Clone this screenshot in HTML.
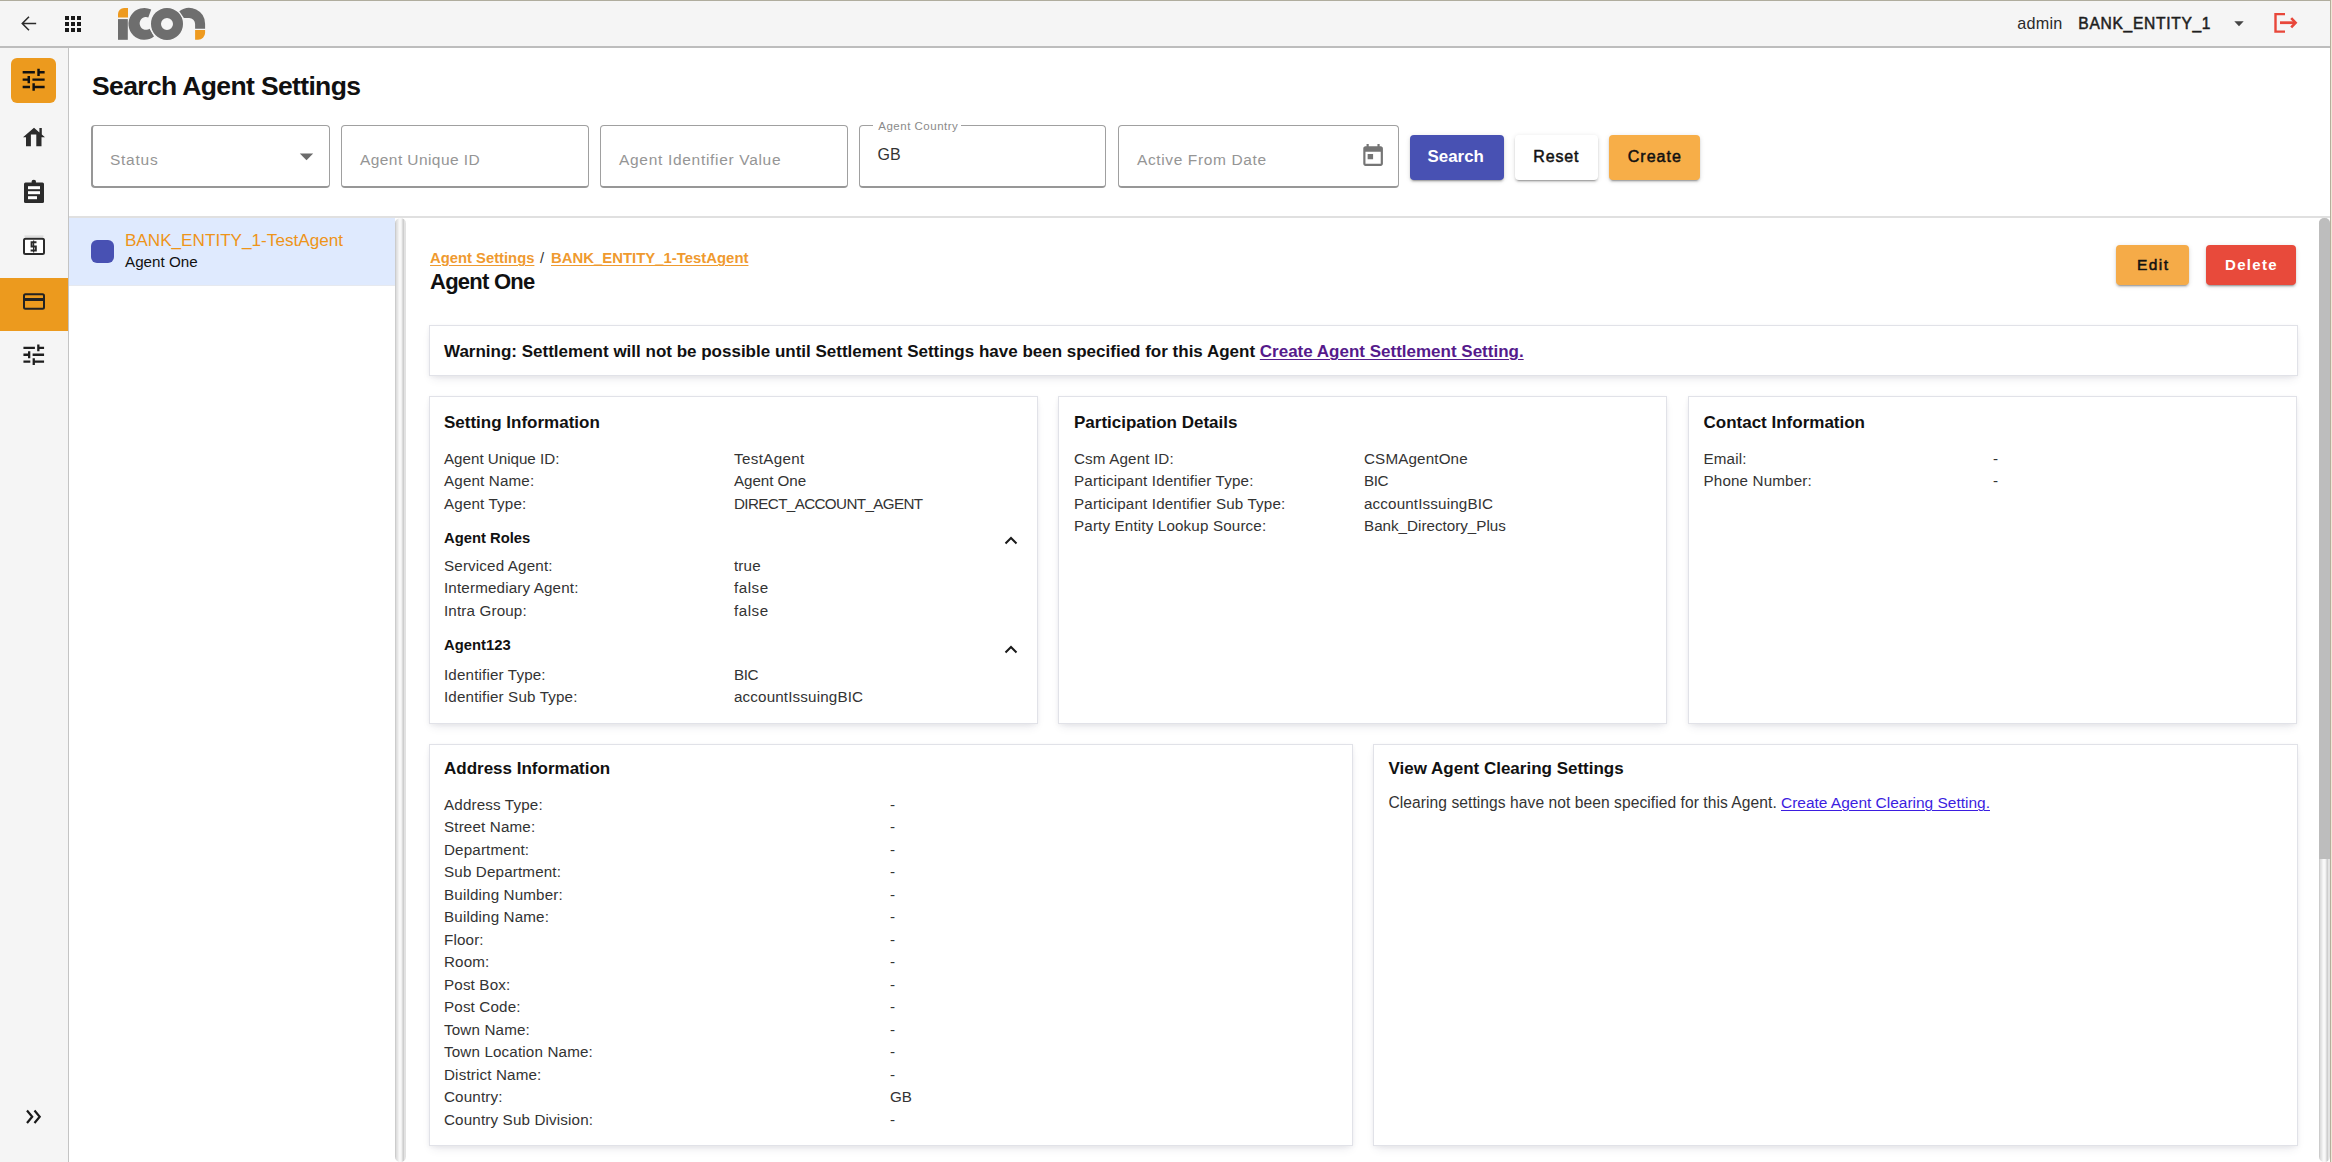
<!DOCTYPE html>
<html><head><meta charset="utf-8"><title>Search Agent Settings</title>
<style>
html,body{margin:0;padding:0;width:2332px;height:1162px;overflow:hidden;background:#fff;}
body{position:relative;font-family:"Liberation Sans",sans-serif;}
.t{position:absolute;white-space:nowrap;}
.r{position:absolute;}
u{text-decoration-thickness:1.3px;}
</style></head><body>
<div class="r" style="left:0px;top:0px;width:2332px;height:48px;background:#f5f5f5;"></div>
<div class="r" style="left:0px;top:0px;width:2332px;height:1px;background:#b0ad9e;"></div>
<div class="r" style="left:0px;top:46px;width:2330px;height:2px;background:#bdbdbd;"></div>
<svg class="r" style="left:17px;top:12px;" width="23" height="23" viewBox="0 0 24 24"><path d="M20 12H5.5M12.5 5L5.5 12L12.5 19" fill="none" stroke="#2b2b2b" stroke-width="1.6"/></svg>
<svg class="r" style="left:61px;top:12px;" width="24" height="24" viewBox="0 0 24 24"><path fill="#1a1a1a" d="M4 8h4V4H4v4zm6 12h4v-4h-4v4zm-6 0h4v-4H4v4zm0-6h4v-4H4v4zm6 0h4v-4h-4v4zm6-10v4h4V4h-4zm-6 4h4V4h-4v4zm6 6h4v-4h-4v4zm0 6h4v-4h-4v4z"/></svg>
<svg class="r" style="left:0px;top:0px;" width="220" height="47" viewBox="0 0 220 47">
<path fill="#ee9a1f" d="M118 17.6V14A6.1 6.1 0 0 1 124.1 7.9H128V17.6Z"/>
<rect x="118" y="19.1" width="9.8" height="20.7" fill="#6e6e6e"/>
<path fill="#6e6e6e" d="M151.2 9.6A15.9 15.9 0 1 0 154 36.6L149.6 28.7A6.4 6.4 0 1 1 148.3 17.4Z"/>
<circle cx="167" cy="23.9" r="11" fill="none" stroke="#f5f5f5" stroke-width="12.6"/>
<circle cx="167" cy="23.9" r="11" fill="none" stroke="#6e6e6e" stroke-width="10"/>
<path fill="#f5f5f5" d="M178.2 10.3A17.2 17.2 0 0 1 206.3 24V29.5H193.8V24A4.7 4.7 0 0 0 189.1 19.3H183.1Z"/>
<path fill="#6e6e6e" d="M179.3 11.3A16 16 0 0 1 205.1 24V28.8H195.1V24A6 6 0 0 0 189.1 18H183.9Z"/>
<path fill="#ee9a1f" d="M195.1 30H205.1V32.8A7 7 0 0 1 198.1 39.8H195.1Z"/>
</svg>
<div class="t" style="left:2017.3px;top:15.49px;font-size:16.2px;line-height:16.2px;color:#2a2a2a;letter-spacing:0.2px;">admin</div>
<div class="t" style="left:2078.3px;top:15.69px;font-size:15.6px;line-height:15.6px;color:#1e1e1e;-webkit-text-stroke:0.5px currentColor;letter-spacing:0.69px;">BANK_ENTITY_1</div>
<svg class="r" style="left:2233px;top:20px;" width="12" height="8" viewBox="0 0 12 8"><path d="M1.3 1.2H10.7L6 6.2Z" fill="#444"/></svg>
<svg class="r" style="left:2272px;top:11px;" width="28" height="24" viewBox="0 0 28 24"><path d="M13 3.1H3.5V20.6H13" fill="none" stroke="#e8473a" stroke-width="2.4"/><path d="M8 11.7H22.5" stroke="#e8473a" stroke-width="2.8"/><path d="M19.2 7.1L23.6 11.7L19.2 16.3" fill="none" stroke="#e8473a" stroke-width="2.6"/></svg>
<div class="r" style="left:0px;top:48px;width:68px;height:1114px;background:#f5f5f5;"></div>
<div class="r" style="left:68px;top:48px;width:1px;height:1114px;background:#c4c4c4;"></div>
<div class="r" style="left:11px;top:58px;width:45px;height:45px;background:#ec9a1e;border-radius:6px;"></div>
<svg class="r" style="left:19.2px;top:65.3px;" width="29.3" height="29.3" viewBox="0 0 24 24"><path fill="#111" d="M3 17v2h6v-2H3zM3 5v2h10V5H3zm10 16v-2h8v-2h-8v-2h-2v6h2zM7 9v2H3v2h4v2h2V9H7zm14 4v-2H11v2h10zm-6-4h2V7h4V5h-4V3h-2v6z"/></svg>
<svg class="r" style="left:0px;top:0px;" width="68" height="220" viewBox="0 0 68 220"><path fill="#2b2b2b" d="M23 137.3L34 127.8L39.4 132.4V128H41.8V134.4L45 137.3H41.5V146.2H36.3V134.6H30.9V146.2H26V137.3Z"/><path fill="#2b2b2b" d="M0 0"/><rect x="24" y="182.5" width="20" height="20.5" rx="1.5" fill="#2b2b2b"/><circle cx="33.8" cy="182" r="2.3" fill="#2b2b2b"/><rect x="28" y="186.2" width="12" height="3" fill="#fff"/><rect x="28" y="191.2" width="12" height="3" fill="#fff"/><rect x="28" y="196.2" width="9" height="3" fill="#fff"/></svg>
<svg class="r" style="left:0px;top:230px;" width="68" height="40" viewBox="0 230 68 40"><rect x="24.5" y="235.6" width="19" height="1" fill="#cfcfcf"/><rect x="24" y="238.8" width="20" height="15.2" rx="1.5" fill="#fff" stroke="#2b2b2b" stroke-width="2"/><path d="M36.5 242.2H31.6V246.4H35.8V250.6H30.6" fill="none" stroke="#2b2b2b" stroke-width="2"/><path d="M33.6 240.5V252.5" stroke="#2b2b2b" stroke-width="1.2"/></svg>
<div class="r" style="left:0px;top:278px;width:68px;height:53px;background:#ec9a1e;"></div>
<svg class="r" style="left:0px;top:285px;" width="68" height="30" viewBox="0 285 68 30"><rect x="24" y="294.2" width="20" height="14.6" rx="1.5" fill="none" stroke="#222" stroke-width="2"/><rect x="24" y="298" width="20" height="3" fill="#222"/></svg>
<svg class="r" style="left:19.5px;top:340.8px;" width="27.5" height="27.5" viewBox="0 0 24 24"><path fill="#1e1e1e" d="M3 17v2h6v-2H3zM3 5v2h10V5H3zm10 16v-2h8v-2h-8v-2h-2v6h2zM7 9v2H3v2h4v2h2V9H7zm14 4v-2H11v2h10zm-6-4h2V7h4V5h-4V3h-2v6z"/></svg>
<svg class="r" style="left:0px;top:1100px;" width="68" height="30" viewBox="0 1100 68 30"><path d="M27 1110.5L32.2 1116.7L27 1123M34.5 1110.5L39.7 1116.7L34.5 1123" fill="none" stroke="#1a1a1a" stroke-width="2.2"/></svg>
<div class="r" style="left:69px;top:48px;width:2261px;height:1114px;background:#fff;"></div>
<div class="r" style="left:2330px;top:0px;width:1px;height:1162px;background:#b4ae9c;"></div>
<div class="r" style="left:2331px;top:0px;width:1px;height:1162px;background:#efe6d6;"></div>
<div class="t" style="left:92px;top:73.27px;font-size:26.5px;line-height:26.5px;color:#111;font-weight:700;letter-spacing:-0.64px;">Search Agent Settings</div>
<div class="r" style="left:91px;top:125px;width:239px;height:63px;border:1px solid #a0a0a0;border-bottom:2px solid #979797;border-left:2px solid #979797;border-radius:4px;box-sizing:border-box;"></div>
<div class="t" style="left:110px;top:151.58px;font-size:15.5px;line-height:15.5px;color:#959595;letter-spacing:0.74px;">Status</div>
<svg class="r" style="left:298px;top:151px;" width="16" height="12" viewBox="0 0 16 12"><path d="M1.8 2.6H15.2L8.5 9.2Z" fill="#6b6b6b"/></svg>
<div class="r" style="left:341px;top:125px;width:248px;height:63px;border:1px solid #a0a0a0;border-bottom:2px solid #979797;border-radius:4px;box-sizing:border-box;"></div>
<div class="t" style="left:360px;top:151.58px;font-size:15.5px;line-height:15.5px;color:#959595;letter-spacing:0.42px;">Agent Unique ID</div>
<div class="r" style="left:600px;top:125px;width:248px;height:63px;border:1px solid #a0a0a0;border-bottom:2px solid #979797;border-radius:4px;box-sizing:border-box;"></div>
<div class="t" style="left:619px;top:151.58px;font-size:15.5px;line-height:15.5px;color:#959595;letter-spacing:0.69px;">Agent Identifier Value</div>
<div class="r" style="left:859px;top:125px;width:247px;height:63px;border:1px solid #a0a0a0;border-bottom:2px solid #979797;border-radius:4px;box-sizing:border-box;"></div>
<div class="t" style="left:877.5px;top:147.06px;font-size:16px;line-height:16px;color:#333;">GB</div>
<div class="r" style="left:873px;top:122px;width:88px;height:6px;background:#fff;"></div>
<div class="t" style="left:878.3px;top:121.27px;font-size:11.5px;line-height:11.5px;color:#8a8a8a;letter-spacing:0.5px;">Agent Country</div>
<div class="r" style="left:1118px;top:125px;width:281px;height:63px;border:1px solid #a0a0a0;border-bottom:2px solid #979797;border-radius:4px;box-sizing:border-box;"></div>
<div class="t" style="left:1137px;top:151.58px;font-size:15.5px;line-height:15.5px;color:#959595;letter-spacing:0.62px;">Active From Date</div>
<svg class="r" style="left:1359.7px;top:142.9px;" width="26.2" height="26.2" viewBox="0 0 24 24"><path fill="#757575" d="M19 3h-1V1h-2v2H8V1H6v2H5c-1.11 0-1.99.9-1.99 2L3 19c0 1.1.89 2 2 2h14c1.1 0 2-.9 2-2V5c0-1.1-.9-2-2-2zm0 16H5V8h14v11zM7 10h5v5H7z"/></svg>
<div class="r" style="left:1410px;top:135px;width:94px;height:45px;background:#4851b3;border-radius:4px;box-shadow:0 3px 1px -2px rgba(0,0,0,.2),0 2px 2px 0 rgba(0,0,0,.14),0 1px 5px 0 rgba(0,0,0,.12);"></div>
<div class="t" style="left:1427.5px;top:148.89px;font-size:16.9px;line-height:16.9px;color:#fff;font-weight:700;">Search</div>
<div class="r" style="left:1515px;top:135px;width:83px;height:45px;background:#fff;border-radius:4px;box-shadow:0 3px 1px -2px rgba(0,0,0,.2),0 2px 2px 0 rgba(0,0,0,.14),0 1px 5px 0 rgba(0,0,0,.12);"></div>
<div class="t" style="left:1533.3px;top:149.46px;font-size:16px;line-height:16px;color:#111;-webkit-text-stroke:0.5px currentColor;letter-spacing:0.85px;">Reset</div>
<div class="r" style="left:1609px;top:135px;width:91px;height:45px;background:#f7ae48;border-radius:4px;box-shadow:0 3px 1px -2px rgba(0,0,0,.2),0 2px 2px 0 rgba(0,0,0,.14),0 1px 5px 0 rgba(0,0,0,.12);"></div>
<div class="t" style="left:1627.8px;top:149.46px;font-size:16px;line-height:16px;color:#111;-webkit-text-stroke:0.5px currentColor;letter-spacing:1.0px;">Create</div>
<div class="r" style="left:69px;top:216px;width:2261px;height:2px;background:#e0e0e0;"></div>
<div class="r" style="left:69px;top:218px;width:326px;height:67px;background:#dfeafe;"></div>
<div class="r" style="left:69px;top:285px;width:326px;height:1px;background:#e6e9ef;"></div>
<div class="r" style="left:91px;top:240px;width:23px;height:23px;background:#4851b3;border-radius:6px;"></div>
<div class="t" style="left:124.9px;top:231.58px;font-size:17.15px;line-height:17.15px;color:#ee9419;">BANK_ENTITY_1-TestAgent</div>
<div class="t" style="left:125px;top:254.33px;font-size:15.2px;line-height:15.2px;color:#111;">Agent One</div>
<div class="r" style="left:395px;top:218px;width:11px;height:944px;background:linear-gradient(90deg,#cccccc 0 1px,#dedede 1px 2px,#e6e6e6 2px 3px,#f0f0f0 3px 4px,#f8f8f8 4px 6px,#f0f0f0 6px 7px,#dcdcdc 7px 8px,#cecece 8px 9px,#e2e2e2 9px 11px);border-radius:6px;"></div>
<div class="t" style="left:430px;top:250.77px;font-size:14.8px;line-height:14.8px;color:#ef9a2f;font-weight:700;"><u style="text-underline-offset:2px">Agent Settings</u></div>
<div class="t" style="left:540px;top:250.77px;font-size:14.8px;line-height:14.8px;color:#333;">/</div>
<div class="t" style="left:551px;top:250.69px;font-size:14.9px;line-height:14.9px;color:#ef9a2f;font-weight:700;"><u style="text-underline-offset:2px">BANK_ENTITY_1-TestAgent</u></div>
<div class="t" style="left:430px;top:271.28px;font-size:22px;line-height:22px;color:#111;font-weight:700;letter-spacing:-0.75px;">Agent One</div>
<div class="r" style="left:2116px;top:245px;width:73px;height:40px;background:#f5ab48;border-radius:4px;box-shadow:0 3px 1px -2px rgba(0,0,0,.2),0 2px 2px 0 rgba(0,0,0,.14),0 1px 5px 0 rgba(0,0,0,.12);"></div>
<div class="t" style="left:2137px;top:256.88px;font-size:15.5px;line-height:15.5px;color:#111;-webkit-text-stroke:0.5px currentColor;letter-spacing:1.43px;">Edit</div>
<div class="r" style="left:2206px;top:245px;width:90px;height:40px;background:#e84a3b;border-radius:4px;box-shadow:0 3px 1px -2px rgba(0,0,0,.2),0 2px 2px 0 rgba(0,0,0,.14),0 1px 5px 0 rgba(0,0,0,.12);"></div>
<div class="t" style="left:2225px;top:257.30px;font-size:15px;line-height:15px;color:#fff;font-weight:700;letter-spacing:1.3px;">Delete</div>
<div class="r" style="left:429px;top:325px;width:1869px;height:51px;background:#fff;border:1px solid #e1e2e8;box-sizing:border-box;box-shadow:0 5px 9px -3px rgba(60,60,90,.13),0 1px 4px rgba(60,60,90,.06);"></div>
<div class="t" style="left:444px;top:343.21px;font-size:17px;line-height:17px;color:#111;font-weight:700;">Warning: Settlement will not be possible until Settlement Settings have been specified for this Agent <u style="color:#551a8b;text-underline-offset:2px">Create Agent Settlement Setting.</u></div>
<div class="r" style="left:429px;top:396px;width:609px;height:328px;background:#fff;border:1px solid #e1e2e8;box-sizing:border-box;box-shadow:0 5px 9px -3px rgba(60,60,90,.13),0 1px 4px rgba(60,60,90,.06);"></div>
<div class="r" style="left:1058px;top:396px;width:609px;height:328px;background:#fff;border:1px solid #e1e2e8;box-sizing:border-box;box-shadow:0 5px 9px -3px rgba(60,60,90,.13),0 1px 4px rgba(60,60,90,.06);"></div>
<div class="r" style="left:1688px;top:396px;width:609px;height:328px;background:#fff;border:1px solid #e1e2e8;box-sizing:border-box;box-shadow:0 5px 9px -3px rgba(60,60,90,.13),0 1px 4px rgba(60,60,90,.06);"></div>
<div class="t" style="left:444px;top:414.31px;font-size:17px;line-height:17px;color:#111;font-weight:700;">Setting Information</div>
<div class="t" style="left:444px;top:450.73px;font-size:15.2px;line-height:15.2px;color:#333;letter-spacing:-0.02px;">Agent Unique ID:</div>
<div class="t" style="left:734px;top:450.73px;font-size:15.2px;line-height:15.2px;color:#333;letter-spacing:0.35px;">TestAgent</div>
<div class="t" style="left:444px;top:473.23px;font-size:15.2px;line-height:15.2px;color:#333;letter-spacing:0.15px;">Agent Name:</div>
<div class="t" style="left:734px;top:473.23px;font-size:15.2px;line-height:15.2px;color:#333;letter-spacing:-0.05px;">Agent One</div>
<div class="t" style="left:444px;top:495.73px;font-size:15.2px;line-height:15.2px;color:#333;letter-spacing:0.15px;">Agent Type:</div>
<div class="t" style="left:734px;top:495.73px;font-size:15.2px;line-height:15.2px;color:#333;letter-spacing:-0.62px;">DIRECT_ACCOUNT_AGENT</div>
<div class="t" style="left:444px;top:530.67px;font-size:14.8px;line-height:14.8px;color:#111;font-weight:700;">Agent Roles</div>
<div class="t" style="left:444px;top:557.93px;font-size:15.2px;line-height:15.2px;color:#333;letter-spacing:0.15px;">Serviced Agent:</div>
<div class="t" style="left:734px;top:557.93px;font-size:15.2px;line-height:15.2px;color:#333;letter-spacing:0.15px;">true</div>
<div class="t" style="left:444px;top:580.43px;font-size:15.2px;line-height:15.2px;color:#333;letter-spacing:0.15px;">Intermediary Agent:</div>
<div class="t" style="left:734px;top:580.43px;font-size:15.2px;line-height:15.2px;color:#333;letter-spacing:0.5px;">false</div>
<div class="t" style="left:444px;top:602.93px;font-size:15.2px;line-height:15.2px;color:#333;letter-spacing:0.15px;">Intra Group:</div>
<div class="t" style="left:734px;top:602.93px;font-size:15.2px;line-height:15.2px;color:#333;letter-spacing:0.5px;">false</div>
<div class="t" style="left:444px;top:637.97px;font-size:14.8px;line-height:14.8px;color:#111;font-weight:700;">Agent123</div>
<div class="t" style="left:444px;top:666.83px;font-size:15.2px;line-height:15.2px;color:#333;letter-spacing:0.15px;">Identifier Type:</div>
<div class="t" style="left:734px;top:666.83px;font-size:15.2px;line-height:15.2px;color:#333;letter-spacing:-0.45px;">BIC</div>
<div class="t" style="left:444px;top:689.33px;font-size:15.2px;line-height:15.2px;color:#333;letter-spacing:0.15px;">Identifier Sub Type:</div>
<div class="t" style="left:734px;top:689.33px;font-size:15.2px;line-height:15.2px;color:#333;letter-spacing:0.15px;">accountIssuingBIC</div>
<svg class="r" style="left:1003.5px;top:536px;" width="14" height="9" viewBox="0 0 14 9"><path d="M1.5 7.5L7 2L12.5 7.5" fill="none" stroke="#1a1a1a" stroke-width="2"/></svg>
<svg class="r" style="left:1003.5px;top:644.5px;" width="14" height="9" viewBox="0 0 14 9"><path d="M1.5 7.5L7 2L12.5 7.5" fill="none" stroke="#1a1a1a" stroke-width="2"/></svg>
<div class="t" style="left:1074px;top:414.31px;font-size:17px;line-height:17px;color:#111;font-weight:700;">Participation Details</div>
<div class="t" style="left:1074px;top:450.93px;font-size:15.2px;line-height:15.2px;color:#333;letter-spacing:0.15px;">Csm Agent ID:</div>
<div class="t" style="left:1364px;top:450.93px;font-size:15.2px;line-height:15.2px;color:#333;letter-spacing:0.15px;">CSMAgentOne</div>
<div class="t" style="left:1074px;top:473.28px;font-size:15.2px;line-height:15.2px;color:#333;letter-spacing:0.15px;">Participant Identifier Type:</div>
<div class="t" style="left:1364px;top:473.28px;font-size:15.2px;line-height:15.2px;color:#333;letter-spacing:-0.45px;">BIC</div>
<div class="t" style="left:1074px;top:495.63px;font-size:15.2px;line-height:15.2px;color:#333;letter-spacing:0.15px;">Participant Identifier Sub Type:</div>
<div class="t" style="left:1364px;top:495.63px;font-size:15.2px;line-height:15.2px;color:#333;letter-spacing:0.15px;">accountIssuingBIC</div>
<div class="t" style="left:1074px;top:517.98px;font-size:15.2px;line-height:15.2px;color:#333;letter-spacing:0.15px;">Party Entity Lookup Source:</div>
<div class="t" style="left:1364px;top:517.98px;font-size:15.2px;line-height:15.2px;color:#333;">Bank_Directory_Plus</div>
<div class="t" style="left:1703.5px;top:414.31px;font-size:17px;line-height:17px;color:#111;font-weight:700;">Contact Information</div>
<div class="t" style="left:1703.5px;top:450.93px;font-size:15.2px;line-height:15.2px;color:#333;letter-spacing:0.15px;">Email:</div>
<div class="t" style="left:1993px;top:450.93px;font-size:15.2px;line-height:15.2px;color:#333;">-</div>
<div class="t" style="left:1703.5px;top:473.28px;font-size:15.2px;line-height:15.2px;color:#333;letter-spacing:0.15px;">Phone Number:</div>
<div class="t" style="left:1993px;top:473.28px;font-size:15.2px;line-height:15.2px;color:#333;">-</div>
<div class="r" style="left:429px;top:744px;width:924px;height:402px;background:#fff;border:1px solid #e1e2e8;box-sizing:border-box;box-shadow:0 5px 9px -3px rgba(60,60,90,.13),0 1px 4px rgba(60,60,90,.06);"></div>
<div class="r" style="left:1373px;top:744px;width:925px;height:402px;background:#fff;border:1px solid #e1e2e8;box-sizing:border-box;box-shadow:0 5px 9px -3px rgba(60,60,90,.13),0 1px 4px rgba(60,60,90,.06);"></div>
<div class="t" style="left:444px;top:760.31px;font-size:17px;line-height:17px;color:#111;font-weight:700;">Address Information</div>
<div class="t" style="left:444px;top:796.73px;font-size:15.2px;line-height:15.2px;color:#333;letter-spacing:0.15px;">Address Type:</div>
<div class="t" style="left:890px;top:796.73px;font-size:15.2px;line-height:15.2px;color:#333;">-</div>
<div class="t" style="left:444px;top:819.23px;font-size:15.2px;line-height:15.2px;color:#333;letter-spacing:0.15px;">Street Name:</div>
<div class="t" style="left:890px;top:819.23px;font-size:15.2px;line-height:15.2px;color:#333;">-</div>
<div class="t" style="left:444px;top:841.73px;font-size:15.2px;line-height:15.2px;color:#333;letter-spacing:0.15px;">Department:</div>
<div class="t" style="left:890px;top:841.73px;font-size:15.2px;line-height:15.2px;color:#333;">-</div>
<div class="t" style="left:444px;top:864.23px;font-size:15.2px;line-height:15.2px;color:#333;letter-spacing:0.15px;">Sub Department:</div>
<div class="t" style="left:890px;top:864.23px;font-size:15.2px;line-height:15.2px;color:#333;">-</div>
<div class="t" style="left:444px;top:886.73px;font-size:15.2px;line-height:15.2px;color:#333;letter-spacing:0.15px;">Building Number:</div>
<div class="t" style="left:890px;top:886.73px;font-size:15.2px;line-height:15.2px;color:#333;">-</div>
<div class="t" style="left:444px;top:909.23px;font-size:15.2px;line-height:15.2px;color:#333;letter-spacing:0.15px;">Building Name:</div>
<div class="t" style="left:890px;top:909.23px;font-size:15.2px;line-height:15.2px;color:#333;">-</div>
<div class="t" style="left:444px;top:931.73px;font-size:15.2px;line-height:15.2px;color:#333;letter-spacing:0.15px;">Floor:</div>
<div class="t" style="left:890px;top:931.73px;font-size:15.2px;line-height:15.2px;color:#333;">-</div>
<div class="t" style="left:444px;top:954.23px;font-size:15.2px;line-height:15.2px;color:#333;letter-spacing:0.15px;">Room:</div>
<div class="t" style="left:890px;top:954.23px;font-size:15.2px;line-height:15.2px;color:#333;">-</div>
<div class="t" style="left:444px;top:976.73px;font-size:15.2px;line-height:15.2px;color:#333;letter-spacing:0.15px;">Post Box:</div>
<div class="t" style="left:890px;top:976.73px;font-size:15.2px;line-height:15.2px;color:#333;">-</div>
<div class="t" style="left:444px;top:999.23px;font-size:15.2px;line-height:15.2px;color:#333;letter-spacing:0.15px;">Post Code:</div>
<div class="t" style="left:890px;top:999.23px;font-size:15.2px;line-height:15.2px;color:#333;">-</div>
<div class="t" style="left:444px;top:1021.73px;font-size:15.2px;line-height:15.2px;color:#333;letter-spacing:0.15px;">Town Name:</div>
<div class="t" style="left:890px;top:1021.73px;font-size:15.2px;line-height:15.2px;color:#333;">-</div>
<div class="t" style="left:444px;top:1044.23px;font-size:15.2px;line-height:15.2px;color:#333;letter-spacing:0.15px;">Town Location Name:</div>
<div class="t" style="left:890px;top:1044.23px;font-size:15.2px;line-height:15.2px;color:#333;">-</div>
<div class="t" style="left:444px;top:1066.73px;font-size:15.2px;line-height:15.2px;color:#333;letter-spacing:0.15px;">District Name:</div>
<div class="t" style="left:890px;top:1066.73px;font-size:15.2px;line-height:15.2px;color:#333;">-</div>
<div class="t" style="left:444px;top:1089.23px;font-size:15.2px;line-height:15.2px;color:#333;letter-spacing:0.15px;">Country:</div>
<div class="t" style="left:890px;top:1089.23px;font-size:15.2px;line-height:15.2px;color:#333;">GB</div>
<div class="t" style="left:444px;top:1111.73px;font-size:15.2px;line-height:15.2px;color:#333;letter-spacing:0.15px;">Country Sub Division:</div>
<div class="t" style="left:890px;top:1111.73px;font-size:15.2px;line-height:15.2px;color:#333;">-</div>
<div class="t" style="left:1388.5px;top:760.11px;font-size:17px;line-height:17px;color:#111;font-weight:700;">View Agent Clearing Settings</div>
<div class="t" style="left:1388.5px;top:794.99px;font-size:15.6px;line-height:15.6px;color:#333;letter-spacing:0.06px;">Clearing settings have not been specified for this Agent.</div>
<div class="t" style="left:1781px;top:795.10px;font-size:15.47px;line-height:15.47px;color:#3b1de0;"><u style="text-underline-offset:2px">Create Agent Clearing Setting.</u></div>
<div class="r" style="left:2319px;top:218px;width:11px;height:944px;background:linear-gradient(90deg,#cccccc 0 1px,#dedede 1px 2px,#e6e6e6 2px 3px,#f0f0f0 3px 4px,#f8f8f8 4px 6px,#f0f0f0 6px 7px,#dcdcdc 7px 8px,#cecece 8px 9px,#e2e2e2 9px 11px);border-radius:6px;"></div>
<div class="r" style="left:2319px;top:218px;width:11px;height:641px;background:#bdbdbd;border-radius:5px 5px 0 0;"></div>
</body></html>
